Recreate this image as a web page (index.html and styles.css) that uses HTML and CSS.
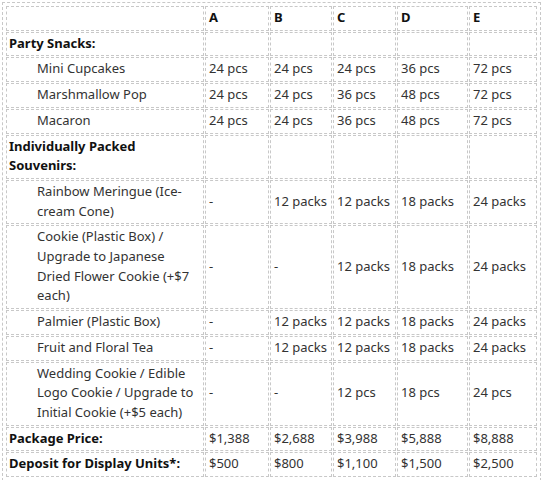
FILE: index.html
```html
<!DOCTYPE html>
<html>
<head>
<meta charset="utf-8">
<link rel="stylesheet" href="styles.css">
</head>
<body>
<table class="pkg">
  <colgroup>
    <col class="c-name"><col class="c-a"><col class="c-b"><col class="c-c"><col class="c-d"><col class="c-e">
  </colgroup>
  <tr class="head"><td></td><td>A</td><td>B</td><td>C</td><td>D</td><td>E</td></tr>
  <tr><td class="group">Party Snacks:</td><td></td><td></td><td></td><td></td><td></td></tr>
  <tr><td class="item">Mini Cupcakes</td><td>24 pcs</td><td>24 pcs</td><td>24 pcs</td><td>36 pcs</td><td>72 pcs</td></tr>
  <tr><td class="item">Marshmallow Pop</td><td>24 pcs</td><td>24 pcs</td><td>36 pcs</td><td>48 pcs</td><td>72 pcs</td></tr>
  <tr><td class="item">Macaron</td><td>24 pcs</td><td>24 pcs</td><td>36 pcs</td><td>48 pcs</td><td>72 pcs</td></tr>
  <tr><td class="group">Individually Packed Souvenirs:</td><td></td><td></td><td></td><td></td><td></td></tr>
  <tr><td class="item">Rainbow Meringue (Ice-cream Cone)</td><td>-</td><td>12 packs</td><td>12 packs</td><td>18 packs</td><td>24 packs</td></tr>
  <tr><td class="item">Cookie (Plastic Box) / Upgrade to Japanese Dried Flower Cookie (+$7 each)</td><td>-</td><td>-</td><td>12 packs</td><td>18 packs</td><td>24 packs</td></tr>
  <tr><td class="item">Palmier (Plastic Box)</td><td>-</td><td>12 packs</td><td>12 packs</td><td>18 packs</td><td>24 packs</td></tr>
  <tr><td class="item">Fruit and Floral Tea</td><td>-</td><td>12 packs</td><td>12 packs</td><td>18 packs</td><td>24 packs</td></tr>
  <tr><td class="item">Wedding Cookie / Edible Logo Cookie / Upgrade to Initial Cookie (+$5 each)</td><td>-</td><td>-</td><td>12 pcs</td><td>18 pcs</td><td>24 pcs</td></tr>
  <tr><td class="group">Package Price:</td><td>$1,388</td><td>$2,688</td><td>$3,988</td><td>$5,888</td><td>$8,888</td></tr>
  <tr><td class="group">Deposit for Display Units*:</td><td>$500</td><td>$800</td><td>$1,100</td><td>$1,500</td><td>$2,500</td></tr>
</table>
</body>
</html>
```
FILE: styles.css
```css
html, body {
  margin: 0;
  padding: 0;
  background: #ffffff;
}
body {
  padding: 2px;
  font-family: "Noto Sans", "Open Sans", sans-serif;
  font-size: 13px;
  line-height: 19.7px;
  color: #333333;
}
.pkg {
  width: 538px;
  table-layout: fixed;
  border-collapse: separate;
  border-spacing: 1px;
  border: 1px dashed #c8c8c8;
  padding: 2px;
}
.c-name { width: 198px; }
.c-a { width: 64px; }
.c-b { width: 62px; }
.c-c { width: 63px; }
.c-d { width: 71px; }
.c-e { width: 68px; }
.pkg td {
  border: 1px dashed #c8c8c8;
  padding: 1px 3px 2px 3px;
  vertical-align: middle;
  text-align: left;
}
.head td {
  font-weight: bold;
  color: #111111;
}
.pkg td.group {
  font-weight: bold;
  color: #111111;
  padding-left: 2px;
}
.pkg td.item {
  padding-left: 30px;
}
```
